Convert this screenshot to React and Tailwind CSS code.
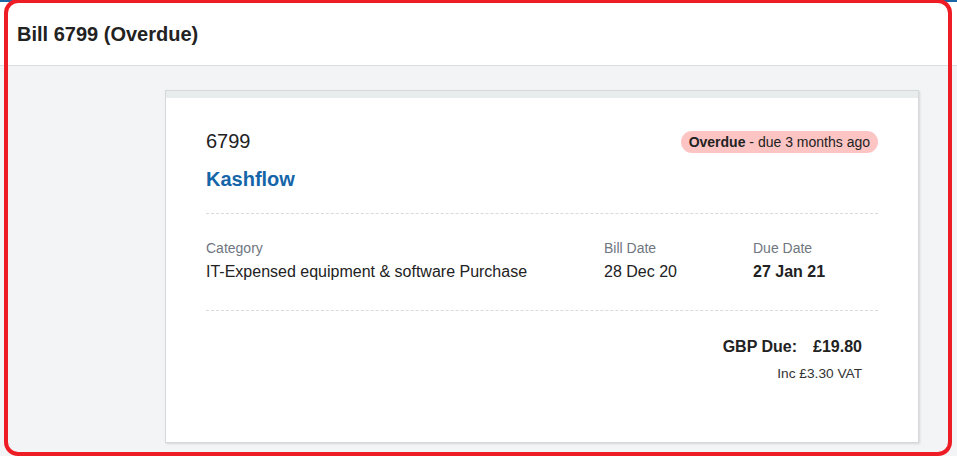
import React from 'react'

const FONT = { fontFamily: '"Liberation Sans", Arial, sans-serif' }

function Badge() {
  return (
    <div className="mt-[2px] h-[22px] flex items-center px-2 rounded-full bg-[#fdc4c4] text-[14px] leading-[18px] text-[#222]">
      <span className="font-bold">Overdue</span>
      <span>&nbsp;- due 3 months ago</span>
    </div>
  )
}

function Field({ label, value, bold, className }) {
  return (
    <div className={className}>
      <div className="text-[14px] leading-[20px] text-[#6f7680]">{label}</div>
      <div className={`mt-[3px] text-[16px] leading-[22px] text-[#222] ${bold ? 'font-bold' : ''}`}>{value}</div>
    </div>
  )
}

export default function App() {
  return (
    <div className="relative w-[957px] h-[456px] overflow-hidden bg-[#f3f4f6]" style={FONT}>
      <div className="h-[2px] bg-[#1b67a6]" />

      {/* Header */}
      <div className="h-[64px] bg-white border-b border-[#dcdfe2] flex items-center px-[17px] pt-[1px]">
        <h1 className="text-[20px] leading-[24px] font-bold text-[#222]">Bill 6799 (Overdue)</h1>
      </div>

      {/* Bill card */}
      <div className="mt-[24px] ml-[165px] w-[754px] h-[353px] bg-white border border-[#d6d9dc] shadow-[1px_1px_2px_rgba(0,0,0,0.12)]">
        <div className="h-[7px] bg-[#e9eced]" />
        <div className="px-[40px] pt-[31px]">
          <div className="flex justify-between items-start">
            <div className="text-[20px] leading-[24px] text-[#222]">6799</div>
            <Badge />
          </div>
          <div className="mt-[14px] text-[20px] leading-[24px] font-bold text-[#1565a8]">Kashflow</div>

          <div className="mt-[22px] border-t border-dashed border-[#dadada]" />

          <div className="flex pt-[24px] pb-[27px]">
            <Field className="w-[398px]" label="Category" value="IT-Expensed equipment & software Purchase" />
            <Field className="w-[149px]" label="Bill Date" value="28 Dec 20" />
            <Field label="Due Date" value="27 Jan 21" bold />
          </div>

          <div className="border-t border-dashed border-[#dadada]" />

          <div className="pt-[25px] pr-[16px] flex flex-col items-end">
            <div className="flex gap-[16px] text-[16px] leading-[22px] font-bold text-[#222]">
              <span>GBP Due:</span>
              <span>£19.80</span>
            </div>
            <div className="mt-[7px] text-[13.7px] leading-[18px] text-[#333]">Inc £3.30 VAT</div>
          </div>
        </div>
      </div>

      {/* Annotation outline */}
      <div className="absolute left-[4px] top-[-1px] w-[948px] h-[457px] border-[4px] border-[#ee1c25] rounded-[14px] pointer-events-none" />
    </div>
  )
}
